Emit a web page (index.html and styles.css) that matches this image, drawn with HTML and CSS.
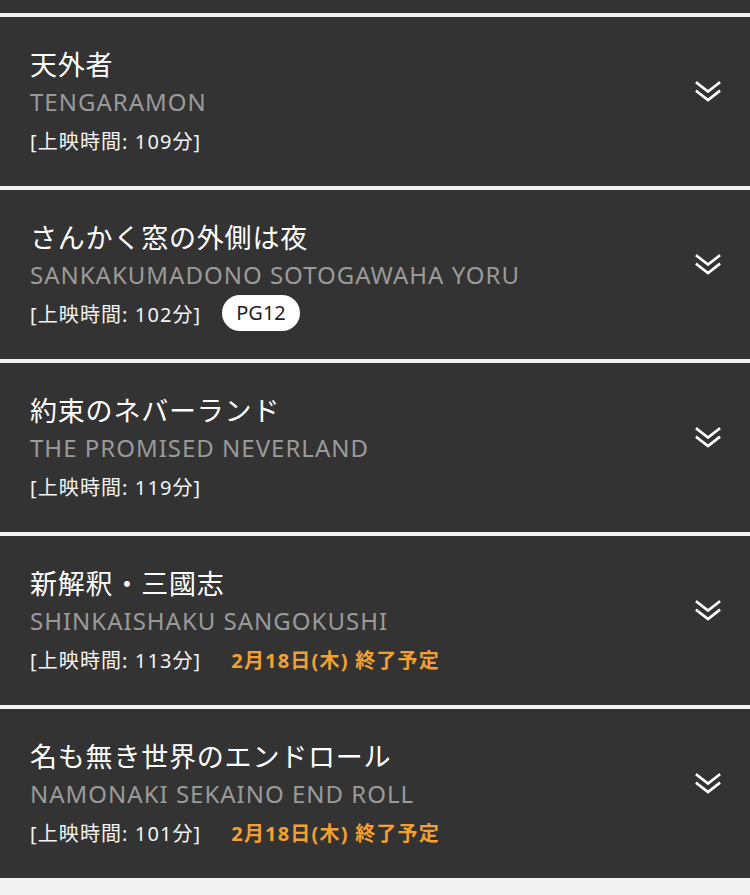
FILE: index.html
```html
<!DOCTYPE html>
<html lang="ja">
<head>
<meta charset="utf-8">
<link rel="stylesheet" href="styles.css">
</head>
<body>
<div class="top-strip"></div>
<ul class="list">
  <li class="card">
    <div class="info">
      <div class="title">天外者</div>
      <div class="sub">TENGARAMON</div>
      <div class="meta"><span class="time">[上映時間: 109分]</span></div>
    </div>
    <svg class="chev" viewBox="0 0 26 22" width="26" height="22"><path d="M2 2 L13 10.5 L24 2 M2 10.5 L13 19 L24 10.5" fill="none" stroke="#fff" stroke-width="2.7" stroke-linecap="square" stroke-linejoin="miter"/></svg>
  </li>
  <li class="card">
    <div class="info">
      <div class="title">さんかく窓の外側は夜</div>
      <div class="sub">SANKAKUMADONO SOTOGAWAHA YORU</div>
      <div class="meta"><span class="time">[上映時間: 102分]</span><span class="badge">PG12</span></div>
    </div>
    <svg class="chev" viewBox="0 0 26 22" width="26" height="22"><path d="M2 2 L13 10.5 L24 2 M2 10.5 L13 19 L24 10.5" fill="none" stroke="#fff" stroke-width="2.7" stroke-linecap="square" stroke-linejoin="miter"/></svg>
  </li>
  <li class="card">
    <div class="info">
      <div class="title">約束のネバーランド</div>
      <div class="sub">THE PROMISED NEVERLAND</div>
      <div class="meta"><span class="time">[上映時間: 119分]</span></div>
    </div>
    <svg class="chev" viewBox="0 0 26 22" width="26" height="22"><path d="M2 2 L13 10.5 L24 2 M2 10.5 L13 19 L24 10.5" fill="none" stroke="#fff" stroke-width="2.7" stroke-linecap="square" stroke-linejoin="miter"/></svg>
  </li>
  <li class="card">
    <div class="info">
      <div class="title">新解釈・三國志</div>
      <div class="sub">SHINKAISHAKU SANGOKUSHI</div>
      <div class="meta"><span class="time">[上映時間: 113分]</span><span class="end">2月18日(木) 終了予定</span></div>
    </div>
    <svg class="chev" viewBox="0 0 26 22" width="26" height="22"><path d="M2 2 L13 10.5 L24 2 M2 10.5 L13 19 L24 10.5" fill="none" stroke="#fff" stroke-width="2.7" stroke-linecap="square" stroke-linejoin="miter"/></svg>
  </li>
  <li class="card">
    <div class="info">
      <div class="title">名も無き世界のエンドロール</div>
      <div class="sub">NAMONAKI SEKAINO END ROLL</div>
      <div class="meta"><span class="time">[上映時間: 101分]</span><span class="end">2月18日(木) 終了予定</span></div>
    </div>
    <svg class="chev" viewBox="0 0 26 22" width="26" height="22"><path d="M2 2 L13 10.5 L24 2 M2 10.5 L13 19 L24 10.5" fill="none" stroke="#fff" stroke-width="2.7" stroke-linecap="square" stroke-linejoin="miter"/></svg>
  </li>
</ul>
</body>
</html>
```
FILE: styles.css
```css
html, body {
  margin: 0;
  padding: 0;
  background: #f3f3f3;
}
body {
  font-family: "Noto Sans", "Noto Sans CJK JP", sans-serif;
  color: #fff;
}
.top-strip {
  height: 13px;
  background: #333333;
}
.list {
  list-style: none;
  margin: 0;
  padding: 4px 0 0;
  display: flex;
  flex-direction: column;
  gap: 4px;
}
.card {
  background: #333333;
  height: 169px;
  box-sizing: border-box;
  padding: 28px 29px 0 30px;
  display: flex;
  align-items: flex-start;
  justify-content: space-between;
}
.info {
  display: flex;
  flex-direction: column;
}
.title {
  font-size: 27px;
  letter-spacing: 0.8px;
  line-height: 38px;
  height: 38px;
  color: #fff;
  font-family: "Noto Sans CJK JP", sans-serif;
}
.sub {
  font-size: 24px;
  line-height: 38px;
  height: 38px;
  color: #9a9a9a;
  letter-spacing: 1px;
}
.meta {
  display: flex;
  align-items: center;
  height: 38px;
}
.time {
  font-size: 20px;
  letter-spacing: 1.1px;
  color: #f4f4f4;
}
.badge {
  margin-left: 21px;
  background: #fff;
  color: #222;
  font-size: 20px;
  height: 36px;
  line-height: 36px;
  padding: 0 14px;
  border-radius: 18px;
}
.end {
  margin-left: 30px;
  color: #f3a033;
  font-weight: bold;
  font-size: 20px;
  letter-spacing: 1.2px;
}
.chev {
  margin-top: 36px;
  flex: none;
}
```
